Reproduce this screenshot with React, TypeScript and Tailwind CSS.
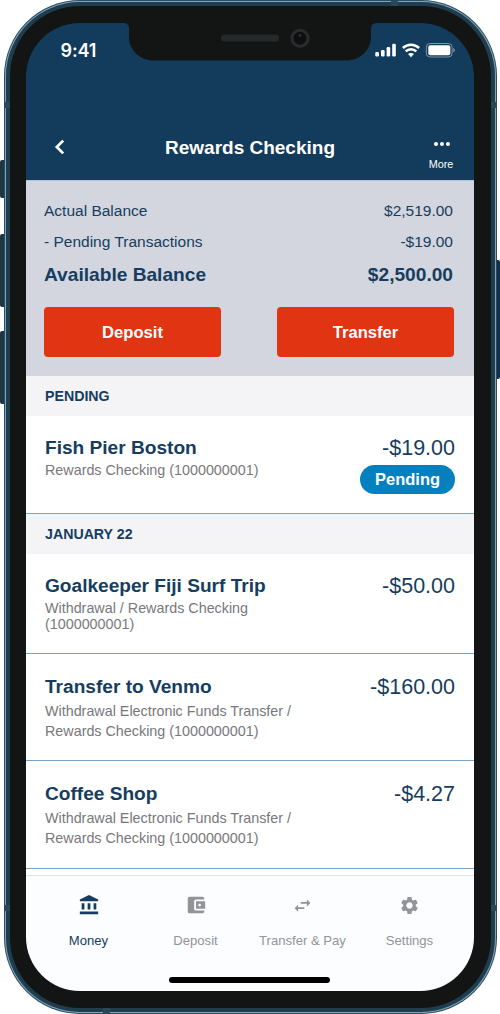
import { MdAccountBalance, MdAccountBalanceWallet, MdSettings, MdSwapHoriz } from "react-icons/md";
import type { ReactNode } from "react";

function StatusBar() {
  return (
    <div className="relative flex h-[37px] items-start">
      <span className="ml-[34.500px] mt-[17px] font-['Inter'] text-[18px] font-semibold leading-[22px] tracking-[-0.100px] text-white">
        9:41
      </span>
      <svg className="absolute left-[97px] top-0" width="254" height="38" viewBox="0 0 254 38" aria-hidden="true">
        <path
          d="M0 0C4 0 6 2 6 6V14C6 27 17 37.5 31 37.5H223C237 37.5 248 27 248 14V6C248 2 250 0 254 0Z"
          fill="#131514"
        />
        <rect x="98" y="11.5" width="58" height="7" rx="3.5" fill="#25292a" />
        <circle cx="177" cy="15.2" r="8" fill="#0e0f10" stroke="#292b2c" strokeWidth="3" />
        <circle cx="177" cy="12.5" r="1.2" fill="#34373a" />
      </svg>
      <svg className="ml-auto mr-[18px] mt-[20px]" width="82" height="15" viewBox="0 0 82 15" aria-hidden="true">
        <g fill="#fff">
          <rect x="1.3" y="9" width="3.6" height="4.5" rx="1.2" />
          <rect x="7" y="7" width="3.6" height="6.5" rx="1.2" />
          <rect x="12.6" y="4" width="3.6" height="9.5" rx="1.2" />
          <rect x="18.2" y="0.7" width="3.6" height="12.8" rx="1.2" />
          <rect x="54.3" y="2.300" width="22" height="10" rx="2" />
          <path d="M79.2 5c1.3.6 1.8 1.4 1.8 2.3s-.5 1.700-1.800 2.300z" opacity=".4" />
          <path d="M37 10c1.200 0 2.200.4 3 1.100L37 14.200l-3-3.100c.8-.7 1.800-1.100 3-1.100z" />
        </g>
        <rect x="52.300" y=".5" width="25.800" height="13.500" rx="3.800" fill="none" stroke="#fff" strokeOpacity=".45" />
        <g fill="none" stroke="#fff" strokeWidth="2.500">
          <path d="M28.900 5c4.600-4.400 11.600-4.400 16.200 0" />
          <path d="M31.700 8.300c3-2.900 7.600-2.900 10.600 0" />
        </g>
      </svg>
    </div>
  );
}

function Header() {
  return (
    <header className="flex h-[120px] items-end text-white">
      <div className="grid h-[55px] w-full grid-cols-[100px_1fr_100px]">
        <svg className="ml-[27.500px] mt-[13px]" width="14" height="18" viewBox="0 0 14 18" aria-label="Back">
          <path d="M9.200 2.600 2.800 9l6.400 6.400" fill="none" stroke="#fff" strokeWidth="2.700" />
        </svg>
        <h1 className="mt-[11px] text-center text-[19px] font-bold leading-[24px]">Rewards Checking</h1>
        <div className="ml-auto mr-[20px] mt-[16px] flex w-[26px] flex-col items-center">
          <svg className="ml-[1px]" width="18" height="6" viewBox="0 0 18 6" fill="#fff" aria-hidden="true">
            <circle cx="3" cy="3" r="2" />
            <circle cx="9" cy="3" r="2" />
            <circle cx="15" cy="3" r="2" />
          </svg>
          <span className="mt-[10px] text-[10.800px] leading-[14px]">More</span>
        </div>
      </div>
    </header>
  );
}

function Balances() {
  return (
    <section className="h-[196px] border-t border-[#b5c5d6] bg-[#d3d6de] pl-[18px] pr-[20px] text-[#163d60]">
      <dl className="pr-[1px] text-[15.500px]">
        <div className="flex justify-between pt-[20px] leading-[20px]">
          <dt>Actual Balance</dt>
          <dd>$2,519.00</dd>
        </div>
        <div className="flex justify-between pt-[11px] leading-[20px]">
          <dt>- Pending Transactions</dt>
          <dd>-$19.00</dd>
        </div>
        <div className="flex justify-between pt-[11px] text-[19.150px] font-bold leading-[24px]">
          <dt>Available Balance</dt>
          <dd>$2,500.00</dd>
        </div>
      </dl>
      <div className="mt-[20px] flex justify-between text-[16.600px] font-bold text-white">
        <button className="h-[50px] w-[177px] rounded bg-[#e03413] pt-[3px]">Deposit</button>
        <button className="h-[50px] w-[177px] rounded bg-[#e03413] pt-[3px]">Transfer</button>
      </div>
    </section>
  );
}

function SectionTitle({ children }: { children: ReactNode }) {
  return (
    <h2 className="h-[40px] bg-[#f4f4f7] pl-[19px] text-[14.200px] font-bold leading-[40px] text-[#163d60]">{children}</h2>
  );
}

type RowProps = { title: string; lines: string[]; amount: string; size: string; detail: string; pending?: boolean };

function Row({ title, lines, amount, size, detail, pending }: RowProps) {
  return (
    <article className={`flex justify-between border-b border-[#76a4c3] bg-white pl-[19px] pr-[19px] ${size}`}>
      <div>
        <h3 className="text-[19.100px] font-bold leading-[24px] text-[#163d60]">{title}</h3>
        <div className={`text-[14.330px] text-[#77787b] ${detail}`}>
          {lines.map((line) => (
            <p key={line}>{line}</p>
          ))}
        </div>
      </div>
      <div className="flex flex-col items-end text-[#163d60]">
        <span className="text-[21.500px] leading-[24px]">{amount}</span>
        {pending && (
          <span className="mt-[5px] h-[29px] w-[95px] rounded-full bg-[#0480bf] text-center text-[16.500px] font-bold leading-[29px] text-white">
            Pending
          </span>
        )}
      </div>
    </article>
  );
}

function Tab({ label, children, active }: { label: string; children: ReactNode; active?: boolean }) {
  return (
    <div className={`flex w-[107px] flex-col items-center ${active ? "text-[#163d60]" : "text-[#929498]"}`}>
      <div className="flex h-[24px] items-center">{children}</div>
      <span className="mt-[16px] text-[13.100px] leading-[16px]">{label}</span>
    </div>
  );
}

function TabBar() {
  return (
    <nav className="h-[117px] border-t border-[#dce4ea] bg-[#fcfdff] pr-[2px]">
      <div className="flex justify-center pt-[17px]">
        <Tab label="Money" active>
          <MdAccountBalance size={22} />
        </Tab>
        <Tab label="Deposit">
          <MdAccountBalanceWallet size={22} />
        </Tab>
        <Tab label="Transfer & Pay">
          <MdSwapHoriz size={21} />
        </Tab>
        <Tab label="Settings">
          <MdSettings size={21} />
        </Tab>
      </div>
      <div className="mx-auto mt-[28px] h-[6px] w-[161px] rounded-full bg-black" />
    </nav>
  );
}

export default function App() {
  return (
    <div className="relative h-[1014px] w-[500px] overflow-hidden bg-white font-['Liberation_Sans',Arial,sans-serif]">
      <i className="absolute left-0 top-[160px] h-[38px] w-[8px] rounded-l-[2px] bg-[#1e3544]" />
      <i className="absolute left-0 top-[234px] h-[73px] w-[8px] rounded-l-[2px] bg-[#1e3544]" />
      <i className="absolute left-0 top-[331px] h-[73px] w-[8px] rounded-l-[2px] bg-[#1e3544]" />
      <i className="absolute right-0 top-[260px] h-[119px] w-[8px] rounded-r-[2px] bg-[#12304a]" />
      <div className="relative mx-auto h-[1014px] w-[493px] rounded-[76px] bg-[#2b4c5f] p-px">
        <div className="h-full rounded-[75px] bg-[#7fa4bc] p-px">
          <div className="h-full rounded-[74px] bg-[#203d4d] p-[4px]">
            <div className="h-full rounded-[70px] bg-[#131514] px-[16.500px] pb-[17px] pt-[16.500px]">
              <main className="h-[968.500px] w-[448px] overflow-hidden rounded-[54px] bg-[#133b5c]">
                <StatusBar />
                <Header />
                <Balances />
                <SectionTitle>PENDING</SectionTitle>
                <Row
                  title="Fish Pier Boston"
                  lines={["Rewards Checking (1000000001)"]}
                  amount="-$19.00"
                  size="h-[98px] pt-[20px]"
                  detail="leading-[20px]"
                  pending
                />
                <SectionTitle>JANUARY 22</SectionTitle>
                <Row
                  title="Goalkeeper Fiji Surf Trip"
                  lines={["Withdrawal / Rewards Checking", "(1000000001)"]}
                  amount="-$50.00"
                  size="h-[100px] pt-[20px]"
                  detail="pt-[2px] leading-[16.500px]"
                />
                <Row
                  title="Transfer to Venmo"
                  lines={["Withdrawal Electronic Funds Transfer /", "Rewards Checking (1000000001)"]}
                  amount="-$160.00"
                  size="h-[107px] pt-[21px]"
                  detail="pt-[2px] leading-[20px]"
                />
                <Row
                  title="Coffee Shop"
                  lines={["Withdrawal Electronic Funds Transfer /", "Rewards Checking (1000000001)"]}
                  amount="-$4.27"
                  size="h-[108px] pt-[21px]"
                  detail="pt-[2px] leading-[20px]"
                />
                <div className="h-[6.500px] bg-white" />
                <TabBar />
              </main>
            </div>
          </div>
        </div>
        <i className="absolute left-0 top-[102px] h-[6px] w-[6px] bg-[#2b4859]" />
        <i className="absolute right-0 top-[102px] h-[6px] w-[6px] bg-[#2b4859]" />
        <i className="absolute left-0 top-[905px] h-[6px] w-[6px] bg-[#2b4859]" />
        <i className="absolute right-0 top-[905px] h-[6px] w-[6px] bg-[#2b4859]" />
        <i className="absolute left-[387px] top-0 h-[6px] w-[7px] bg-[#2b4859]" />
        <i className="absolute bottom-0 left-[99px] h-[6px] w-[7px] bg-[#2b4859]" />
      </div>
    </div>
  );
}
